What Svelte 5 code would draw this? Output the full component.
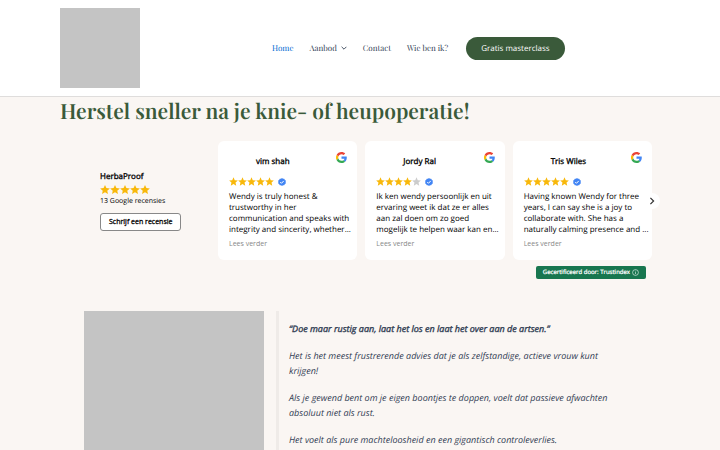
<script lang="ts">
    const reviews = [
        { name: 'vim shah', rating: 5, lines: ['Wendy is truly honest &', 'trustworthy in her', 'communication and speaks with', 'integrity and sincerity, whether...'] },
        { name: 'Jordy Ral', rating: 4, lines: ['Ik ken wendy persoonlijk en uit', 'ervaring weet ik dat ze er alles', 'aan zal doen om zo goed', 'mogelijk te helpen waar kan en...'] },
        { name: 'Tris Wiles', rating: 5, lines: ['Having known Wendy for three', 'years, I can say she is a joy to', 'collaborate with. She has a', 'naturally calming presence and ...'] }
    ];
</script>

{#snippet star(filled: boolean)}
    <svg class="star" class:empty={!filled} viewBox="0 0 20 20" aria-hidden="true">
        <path d="M10 .8l2.8 6.3 6.9.7-5.2 4.6 1.5 6.8-6-3.5-6 3.5 1.5-6.8L.3 7.8l6.9-.7z" />
    </svg>
{/snippet}

<header>
    <div class="header-inner">
        <a class="logo" href="#home" aria-label="HerbaProof"></a>
        <nav>
            <a class="active" href="#home">Home</a>
            <a href="#aanbod">Aanbod
                <svg class="caret" viewBox="0 0 10 10" aria-hidden="true"><path d="M1 3l4 4 4-4" /></svg>
            </a>
            <a href="#contact">Contact</a>
            <a href="#wie">Wie ben ik?</a>
            <a class="cta" href="#masterclass">Gratis masterclass</a>
        </nav>
    </div>
</header>

<main>
    <h1>Herstel sneller na je knie- of heupoperatie!</h1>

    <section class="reviews">
        <div class="summary">
            <strong>HerbaProof</strong>
            <div class="stars large">
                {#each Array(5) as _}
                    {@render star(true)}
                {/each}
            </div>
            <span>13 Google recensies</span>
            <button class="write">Schrijf een recensie</button>
        </div>

        <div class="slider">
            {#each reviews as review}
                <article class="card">
                    <div class="card-head">
                        <strong>{review.name}</strong>
                        <svg class="google" viewBox="0 0 48 48" aria-hidden="true">
                            <path fill="#ea4335" d="M24 9.5c3.5 0 6.7 1.2 9.2 3.6l6.9-6.9C35.9 2.4 30.5 0 24 0 14.6 0 6.5 5.4 2.6 13.2l8 6.2C12.4 13.7 17.7 9.5 24 9.5z" />
                            <path fill="#4285f4" d="M47 24.6c0-1.6-.2-3.1-.4-4.6H24v9h12.9c-.6 3-2.3 5.5-4.8 7.2l7.7 6C44.4 38 47 32 47 24.6z" />
                            <path fill="#fbbc05" d="M10.5 28.6a14.5 14.5 0 0 1 0-9.2l-8-6.2a24 24 0 0 0 0 21.6z" />
                            <path fill="#34a853" d="M24 48c6.5 0 11.9-2.1 15.9-5.8l-7.7-6c-2.2 1.5-4.9 2.3-8.2 2.3-6.3 0-11.6-4.2-13.5-9.9l-8 6.2C6.5 42.6 14.6 48 24 48z" />
                        </svg>
                    </div>
                    <div class="stars">
                        {#each Array(5) as _, i}
                            {@render star(i < review.rating)}
                        {/each}
                        <svg class="verified" viewBox="0 0 16 16" aria-hidden="true">
                            <path class="seal" d="M8 0l2 1.3 2.4.1 1.1 2.1 2 1.3L15.4 8l.1 3.2-2 1.3-1.1 2.1-2.4.1L8 16l-2-1.3-2.4-.1-1.1-2.1-2-1.3L.6 8 .5 4.8l2-1.3 1.1-2.1L6 1.300z" />
                            <path class="check" d="M4.5 8.2l2.4 2.4 4.6-4.8" />
                        </svg>
                    </div>
                    <p>
                        {#each review.lines as line}
                            <span>{line}</span>
                        {/each}
                    </p>
                    <button class="more">Lees verder</button>
                </article>
            {/each}
            <button class="next" aria-label="Volgende">
                <svg viewBox="0 0 10 10" aria-hidden="true"><path d="M3 1l4 4-4 4" /></svg>
            </button>
        </div>
    </section>

    <div class="certified">
        <a href="#trustindex">
            Gecertificeerd door: Trustindex
            <svg viewBox="0 0 12 12" aria-hidden="true"><circle cx="6" cy="6" r="5" /><path d="M6 5.3v3.5M6 3v1.2" /></svg>
        </a>
    </div>

    <section class="story">
        <div class="photo"></div>
        <blockquote>
            <p class="lead">“Doe maar rustig aan, laat het los en laat het over aan de artsen.”</p>
            <p>Het is het meest frustrerende advies dat je als zelfstandige, actieve vrouw kunt krijgen!</p>
            <p>Als je gewend bent om je eigen boontjes te doppen, voelt dat passieve afwachten absoluut niet als rust.</p>
            <p>Het voelt als pure machteloosheid en een gigantisch controleverlies.</p>
        </blockquote>
    </section>
</main>

<style>
    :global(body) { background: #faf6f3; overflow: hidden; }
    :global(#app) { font-family: "Open Sans", "Noto Sans", sans-serif; font-size: 8px; color: #000; text-rendering: geometricPrecision; }
    a { text-decoration: none; color: inherit; }
    button { font: inherit; color: inherit; cursor: pointer; }
    p, h1, blockquote { margin: 0; }

    header { background: #fff; border-bottom: 1px solid #dfdddc; padding: 8px 60px; }
    .header-inner { display: flex; align-items: center; }
    .logo { width: 80px; height: 80px; background: #c4c4c4; flex: none; }
    nav { display: flex; align-items: center; gap: 16px; margin-left: 132px; font-family: "Playfair Display", "Liberation Serif", serif; font-size: 8px; color: #334155; white-space: nowrap; }
    .active { color: #046bd2; }
    .caret { width: 6px; height: 6px; margin-left: 2px; fill: none; stroke: #334155; stroke-width: 1.5; vertical-align: middle; }
    .cta { background: #3a5a3a; color: #fff; border-radius: 12px; padding: 0 15px; line-height: 23px; margin-left: 2px; font-family: "Open Sans", "Noto Sans", sans-serif; }

    main { padding: 0 60px; }
    h1 { font-family: "Playfair Display", "Liberation Serif", serif; font-size: 21px; line-height: 28px; font-weight: 600; color: #3a5a3a; white-space: nowrap; }

    .reviews { display: flex; align-items: center; margin-top: 16px; }
    .summary { width: 118px; padding-left: 40px; flex: none; display: flex; flex-direction: column; align-items: flex-start; line-height: 12px; font-size: 7px; }
    .summary strong { font-size: 8px; }
    .stars { display: flex; align-items: center; }
    .star { width: 9px; height: 9px; fill: #f8b80b; }
    .star.empty { fill: #ccc; }
    .large { padding: 1px 0; }
    .large .star { width: 10px; height: 11px; }
    .write { background: #fff; border: 1px solid #888; border-radius: 3px; margin-top: 5px; padding: 0 8px; line-height: 16px; }
    strong, .write, .lead, .certified a { font-weight: 400; -webkit-text-stroke: 0.04em currentColor; }

    .slider { position: relative; flex: 1; display: grid; grid-template-columns: repeat(3, minmax(0, 1fr)); gap: 8px; margin-right: 8px; }
    .card { background: #fff; border-radius: 6px; padding: 11px 10px 11px 11px; white-space: nowrap; }
    .card-head { display: flex; justify-content: space-between; padding-left: 27px; height: 25px; }
    .card-head strong { padding-top: 4px; }
    .google { width: 11px; height: 11px; }
    .verified { width: 8px; height: 8px; margin-left: 4px; }
    .seal { fill: #4285f4; }
    .check { fill: none; stroke: #fff; stroke-width: 2; }
    .card p { margin-top: 5px; line-height: 11px; }
    .card p span { display: block; }
    .more { display: block; background: none; border: 0; padding: 0; color: #888; margin-top: 4px; font-size: 7px; line-height: 10px; }
    .next { position: absolute; right: -8px; top: 50%; transform: translateY(-50%); width: 16px; height: 16px; border: 0; border-radius: 50%; background: #fff; padding: 0; display: grid; place-items: center; }
    .next svg { width: 8px; height: 8px; fill: none; stroke: #333; stroke-width: 1.5; }

    .certified { display: flex; justify-content: flex-end; padding-right: 14px; margin-top: 6px; }
    .certified a { display: flex; align-items: center; gap: 2px; background: #18764f; color: #fff; border-radius: 2px; padding: 0 7px; line-height: 13px; font-size: 6px; }
    .certified svg { width: 7px; height: 7px; fill: none; stroke: #fff; }

    .story { display: flex; gap: 12px; padding: 0 24px; margin-top: 32px; }
    .photo { width: 180px; height: 180px; flex: none; background: #c4c4c4; }
    blockquote { flex: 1; border-left: 3px solid #efebe8; padding: 10px; font-size: 9px; line-height: 15px; font-style: italic; color: #334155; }
    blockquote p { margin-bottom: 12px; }
</style>
